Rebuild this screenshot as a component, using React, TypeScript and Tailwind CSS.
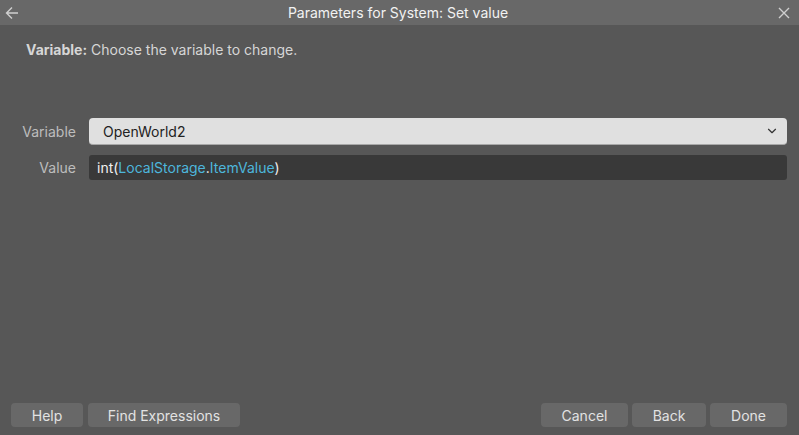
import { ChevronDown } from "lucide-react";

const font = { fontFamily: "Inter, 'Noto Sans', sans-serif" };

function Btn({ label, w }: { label: string; w: string }) {
  return (
    <button
      className={`${w} h-[24px] rounded-[4px] bg-[#686868] text-[14px] text-[#e2e2e2] flex items-center justify-center`}
    >
      {label}
    </button>
  );
}

export default function App() {
  return (
    <div
      className="w-[799px] h-[435px] bg-[#575757] flex flex-col overflow-hidden"
      style={font}
    >
      {/* title bar */}
      <div className="h-[25px] bg-[#686868] flex items-center justify-between px-[5px] shrink-0">
        <svg width="14" height="14" viewBox="0 0 14 14" fill="none" stroke="#cfcfcf" strokeWidth="1.4">
          <path d="M13 7H1.5M7 1.5L1.5 7L7 12.5" />
        </svg>
        <div className="text-[14px] text-[#f2f2f2]">Parameters for System: Set value</div>
        <svg width="14" height="14" viewBox="0 0 14 14" fill="none" stroke="#cfcfcf" strokeWidth="1.4" className="mr-[3px]">
          <path d="M2 2L12 12M12 2L2 12" />
        </svg>
      </div>

      <div className="flex-1 flex flex-col pl-[26px] pr-[12px] pt-[14px] pb-[8px]">
        <div className="text-[14px] text-[#d6d6d6]">
          <span className="font-bold">Variable:</span> Choose the variable to change.
        </div>

        <div className="mt-[58px] -ml-[26px] grid grid-cols-[76px_1fr] gap-x-[13px] gap-y-[10px] items-center">
          <div className="text-right text-[14px] text-[#bdbdbd]">Variable</div>
          <div className="h-[27px] rounded-[4px] bg-[#e0e0e0] border-b border-[#a8a8a8] flex items-center justify-between pl-[14px] pr-[8px]">
            <span className="text-[14px] text-[#222222]">OpenWorld2</span>
            <ChevronDown size={14} strokeWidth={2} color="#333333" />
          </div>
          <div className="text-right text-[14px] text-[#bdbdbd]">Value</div>
          <div className="h-[25px] rounded-[3px] bg-[#393939] flex items-center pl-[8px] text-[14px] text-[#f0f0f0]">
            int(<span className="text-[#4db6dc]">LocalStorage</span>.<span className="text-[#4db6dc]">ItemValue</span>)
          </div>
        </div>

        <div className="mt-auto -ml-[15px] flex items-center">
          <div className="flex gap-[5px]">
            <Btn label="Help" w="w-[72px]" />
            <Btn label="Find Expressions" w="w-[152px]" />
          </div>
          <div className="ml-auto flex gap-[4px]">
            <Btn label="Cancel" w="w-[87px]" />
            <Btn label="Back" w="w-[74px]" />
            <Btn label="Done" w="w-[77px]" />
          </div>
        </div>
      </div>
    </div>
  );
}
